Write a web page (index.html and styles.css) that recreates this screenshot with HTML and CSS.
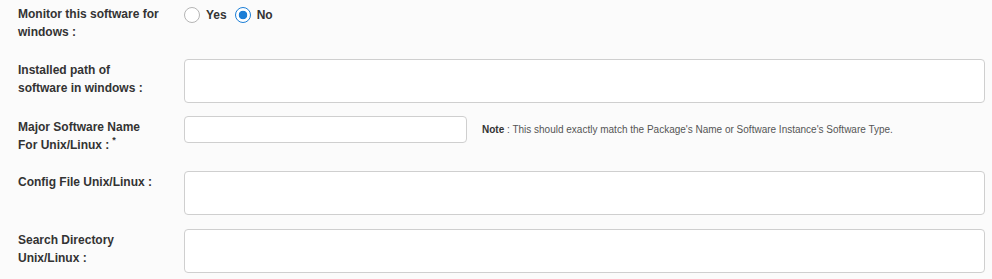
FILE: index.html
```html
<!DOCTYPE html>
<html lang="en">
<head>
    <meta charset="UTF-8">
    <meta name="viewport" content="width=device-width, initial-scale=1.0">
    <title>Software Monitoring</title>
    <link rel="stylesheet" href="styles.css">
</head>
<body>
    <form class="form">
        <!-- Windows -->
        <div class="row row-radio">
            <label class="lbl">Monitor this software for windows :</label>
            <div class="field radios">
                <label class="opt"><input type="radio" name="monitorWin" value="yes"> Yes</label>
                <label class="opt"><input type="radio" name="monitorWin" value="no" checked> No</label>
            </div>
        </div>

        <div class="row row-gap-13">
            <label class="lbl" for="winPath">Installed path of software in windows :</label>
            <div class="field">
                <textarea id="winPath"></textarea>
            </div>
        </div>

        <!-- Unix / Linux -->
        <div class="row row-gap-17">
            <label class="lbl" for="unixName">Major Software Name For Unix/Linux :<span class="req">*</span></label>
            <div class="field inline">
                <input type="text" id="unixName">
                <p class="note"><b>Note</b> : This should exactly match the Package's Name or Software Instance's Software Type.</p>
            </div>
        </div>

        <div class="row">
            <label class="lbl" for="unixConfig">Config File Unix/Linux :</label>
            <div class="field">
                <textarea id="unixConfig"></textarea>
            </div>
        </div>

        <div class="row">
            <label class="lbl" for="unixSearch">Search Directory Unix/Linux :</label>
            <div class="field">
                <textarea id="unixSearch"></textarea>
            </div>
        </div>
    </form>
</body>
</html>
```

FILE: styles.css
```css
body {
    margin: 0;
    padding: 5px 7px 0 18px;
    background-color: #fbfbfb;
    font-family: "Liberation Sans", Arial, sans-serif;
    color: #333;
}
.form {
    margin: 0;
}
.row {
    display: flex;
    align-items: flex-start;
    margin-bottom: 14px;
}
.row-radio {
    margin-bottom: 18px;
}
.row-gap-13 {
    margin-bottom: 13px;
}
.row-gap-17 {
    margin-bottom: 17px;
}
.lbl {
    width: 142px;
    flex: none;
    margin-right: 24px;
    padding-top: 2px;
    font-size: 12px;
    font-weight: bold;
    line-height: 18px;
}
.row-radio .lbl {
    padding-top: 0;
}
.req {
    display: inline-block;
    font-size: 9px;
    line-height: 9px;
    vertical-align: top;
    margin-left: 3px;
}
.field {
    flex: 1;
}
.inline {
    display: flex;
    align-items: center;
}
.radios {
    display: flex;
    align-items: center;
    padding-top: 2px;
}
.opt {
    display: flex;
    align-items: center;
    font-size: 12px;
    font-weight: bold;
    margin-right: 8px;
}
input[type="radio"] {
    appearance: none;
    -webkit-appearance: none;
    width: 16px;
    height: 16px;
    margin: 0 6px 0 0;
    border: 1px solid #b5b5b5;
    border-radius: 50%;
    background: #fff;
}
input[type="radio"]:checked {
    border-color: #1b7ed6;
    background: radial-gradient(circle, #1b7ed6 0, #1b7ed6 4px, #fff 4.6px);
}
textarea, input[type="text"] {
    display: block;
    box-sizing: border-box;
    margin: 0;
    border: 1px solid #cfcfcf;
    border-radius: 4px;
    background: #fff;
    font-family: inherit;
    font-size: 12px;
}
textarea {
    width: 100%;
    height: 44px;
    resize: none;
}
input[type="text"] {
    width: 283px;
    height: 27px;
    padding: 0 8px;
}
.note {
    margin: 0 0 0 15px;
    font-size: 10px;
    color: #555;
}
.note b {
    color: #333;
}
```
